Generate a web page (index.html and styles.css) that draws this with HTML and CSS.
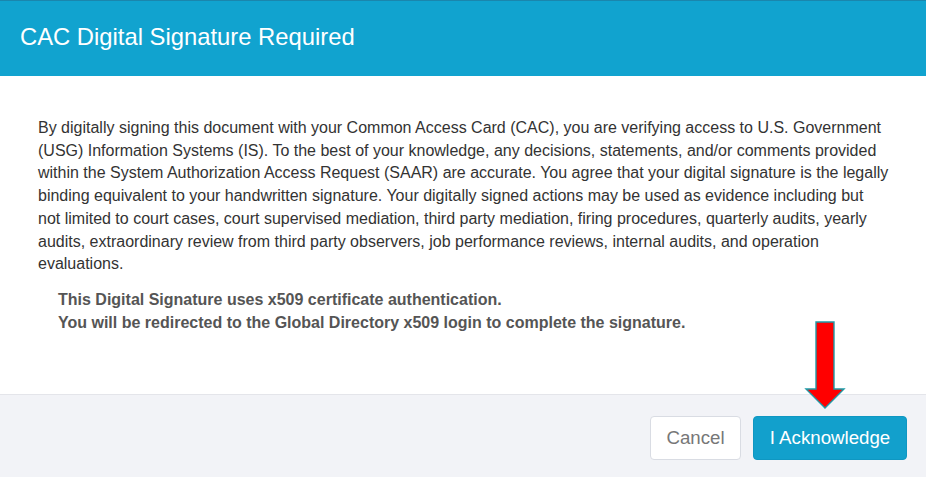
FILE: index.html
```html
<!DOCTYPE html>
<html>
<head>
<meta charset="utf-8">
<link rel="stylesheet" href="styles.css">
</head>
<body>
<div class="modal">
  <div class="modal-header">
    <h1 class="modal-title">CAC Digital Signature Required</h1>
  </div>
  <div class="modal-body">
    <p class="notice">By digitally signing this document with your Common Access Card (CAC), you are verifying access to U.S. Government (USG) Information Systems (IS). To the best of your knowledge, any decisions, statements, and/or comments provided within the System Authorization Access Request (SAAR) are accurate. You agree that your digital signature is the legally binding equivalent to your handwritten signature. Your digitally signed actions may be used as evidence including but not limited to court cases, court supervised mediation, third party mediation, firing procedures, quarterly audits, yearly audits, extraordinary review from third party observers, job performance reviews, internal audits, and operation evaluations.</p>
    <p class="cert">This Digital Signature uses x509 certificate authentication.<br>You will be redirected to the Global Directory x509 login to complete the signature.</p>
  </div>
  <div class="modal-footer">
    <button class="btn btn-cancel">Cancel</button>
    <button class="btn btn-primary">I Acknowledge</button>
  </div>
  <svg class="arrow" width="44" height="92" viewBox="0 0 44 92">
    <polygon points="13,1 31,1 31,68 41,68 22,87 3,68 13,68" fill="#ff0000" stroke="#1e9aa6" stroke-width="1.4" stroke-linejoin="miter"/>
  </svg>
</div>
</body>
</html>
```
FILE: styles.css
```css
html, body {
  margin: 0;
  padding: 0;
  background: #ffffff;
}
body {
  font-family: "Liberation Sans", Arial, sans-serif;
  width: 926px;
  height: 477px;
  overflow: hidden;
}
.modal {
  position: relative;
  display: flex;
  flex-direction: column;
  height: 477px;
}
.modal-header {
  background: #11a3cf;
  border-top: 1px solid #1a86ad;
  height: 75px;
  display: flex;
  align-items: center;
  padding-left: 20px;
}
.modal-title {
  margin: 0;
  color: #ffffff;
  font-weight: normal;
  font-size: 23.8px;
  padding-bottom: 3px;
}
.modal-body {
  flex: 1;
  padding: 41px 37px 0 38px;
}
.notice {
  margin: 0;
  font-size: 16px;
  line-height: 22.7px;
  color: #333333;
}
.cert {
  margin: 12px 0 0 20px;
  font-size: 16px;
  line-height: 23px;
  font-weight: bold;
  color: #555555;
}
.modal-footer {
  height: 83px;
  background: #f2f3f7;
  border-top: 1px solid #e4e5ea;
  display: flex;
  justify-content: flex-end;
  align-items: flex-start;
  gap: 12px;
  padding: 21px 19px 0 0;
  box-sizing: border-box;
}
.btn {
  height: 44px;
  font-family: "Liberation Sans", Arial, sans-serif;
  font-size: 18.7px;
  border-radius: 4px;
  cursor: pointer;
  padding: 0;
}
.btn-cancel {
  width: 91px;
  background: #ffffff;
  border: 1px solid #d9dce3;
  color: #777777;
}
.btn-primary {
  width: 154px;
  background: #12a0cc;
  border: 1px solid #0f97c2;
  color: #ffffff;
}
.arrow {
  position: absolute;
  left: 803px;
  top: 321px;
}
```
